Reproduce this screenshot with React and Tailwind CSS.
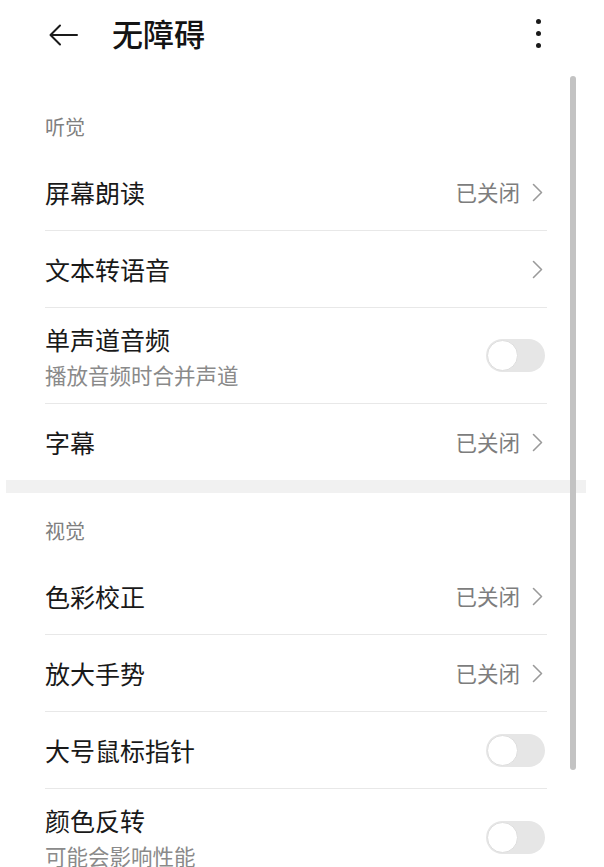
import React from "react";

const font = { fontFamily: '"Noto Sans CJK SC", "Noto Sans", sans-serif' };

const Chevron = () => (
  <svg width="11" height="19" viewBox="0 0 11 19" fill="none" className="ml-[12px] mr-[4px]">
    <path d="M1.5 1.5 L9.5 9.5 L1.5 17.5" stroke="#9a9a9a" strokeWidth="1.6" strokeLinecap="round" strokeLinejoin="round" />
  </svg>
);

const Toggle = () => (
  <div className="mr-[2px] flex h-[33px] w-[59px] items-center rounded-full bg-[#e6e6e6] px-[1px]">
    <div className="h-[31px] w-[31px] rounded-full border border-[#dedede] bg-white" />
  </div>
);

const Row = ({ title, sub, value, chevron, toggle, last }) => (
  <div
    className={
      "flex items-center justify-between " +
      (sub ? "h-[96px] " : last ? "h-[76px] " : "h-[77px] ") +
      (last ? "" : "border-b border-[#e8e8e8]")
    }
  >
    <div className="flex flex-col">
      <span className="text-[25px] leading-[32px] text-[#191919]">{title}</span>
      {sub && <span className="mt-[6px] text-[21.5px] leading-[28px] text-[#8a8a8a]">{sub}</span>}
    </div>
    <div className="flex items-center">
      {value && <span className="text-[21.5px] leading-[28px] text-[#7d7d7d]">{value}</span>}
      {chevron && <Chevron />}
      {toggle && <Toggle />}
    </div>
  </div>
);

const Label = ({ children }) => (
  <div className="h-[65px] pt-[28px] text-[20px] leading-[20px] text-[#808080]">{children}</div>
);

export default function App() {
  return (
    <div className="relative h-[867px] w-[604px] overflow-hidden bg-white" style={font}>
      <div className="flex h-[66px] items-center pl-[49px] pr-[63px]">
        <svg width="29" height="22" viewBox="0 0 29 22" fill="none" className="mt-[3px]">
          <path d="M28 11 H2 M11 1.5 L1.5 11 L11 20.5" stroke="#1a1a1a" strokeWidth="2" strokeLinecap="round" strokeLinejoin="round" />
        </svg>
        <h1 className="ml-[34px] text-[31px] font-medium leading-[40px] text-[#141414]">无障碍</h1>
        <div className="ml-auto flex flex-col gap-[7px]">
          <span className="h-[5px] w-[5px] rounded-full bg-[#1a1a1a]" />
          <span className="h-[5px] w-[5px] rounded-full bg-[#1a1a1a]" />
          <span className="h-[5px] w-[5px] rounded-full bg-[#1a1a1a]" />
        </div>
      </div>

      <div className="mt-[23px]">
        <div className="pl-[45px] pr-[57px]">
          <Label>听觉</Label>
          <Row title="屏幕朗读" value="已关闭" chevron />
          <Row title="文本转语音" chevron />
          <Row title="单声道音频" sub="播放音频时合并声道" toggle />
          <Row title="字幕" value="已关闭" chevron last />
        </div>

        <div className="ml-[6px] h-[13px] w-[580px] bg-[#f1f1f1]" />

        <div className="pl-[45px] pr-[57px]">
          <Label>视觉</Label>
          <Row title="色彩校正" value="已关闭" chevron />
          <Row title="放大手势" value="已关闭" chevron />
          <Row title="大号鼠标指针" toggle />
          <Row title="颜色反转" sub="可能会影响性能" toggle last />
        </div>
      </div>

      <div className="absolute left-[570px] top-[76px] h-[694px] w-[6px] rounded-full bg-[#c3c3c3]" />
    </div>
  );
}
